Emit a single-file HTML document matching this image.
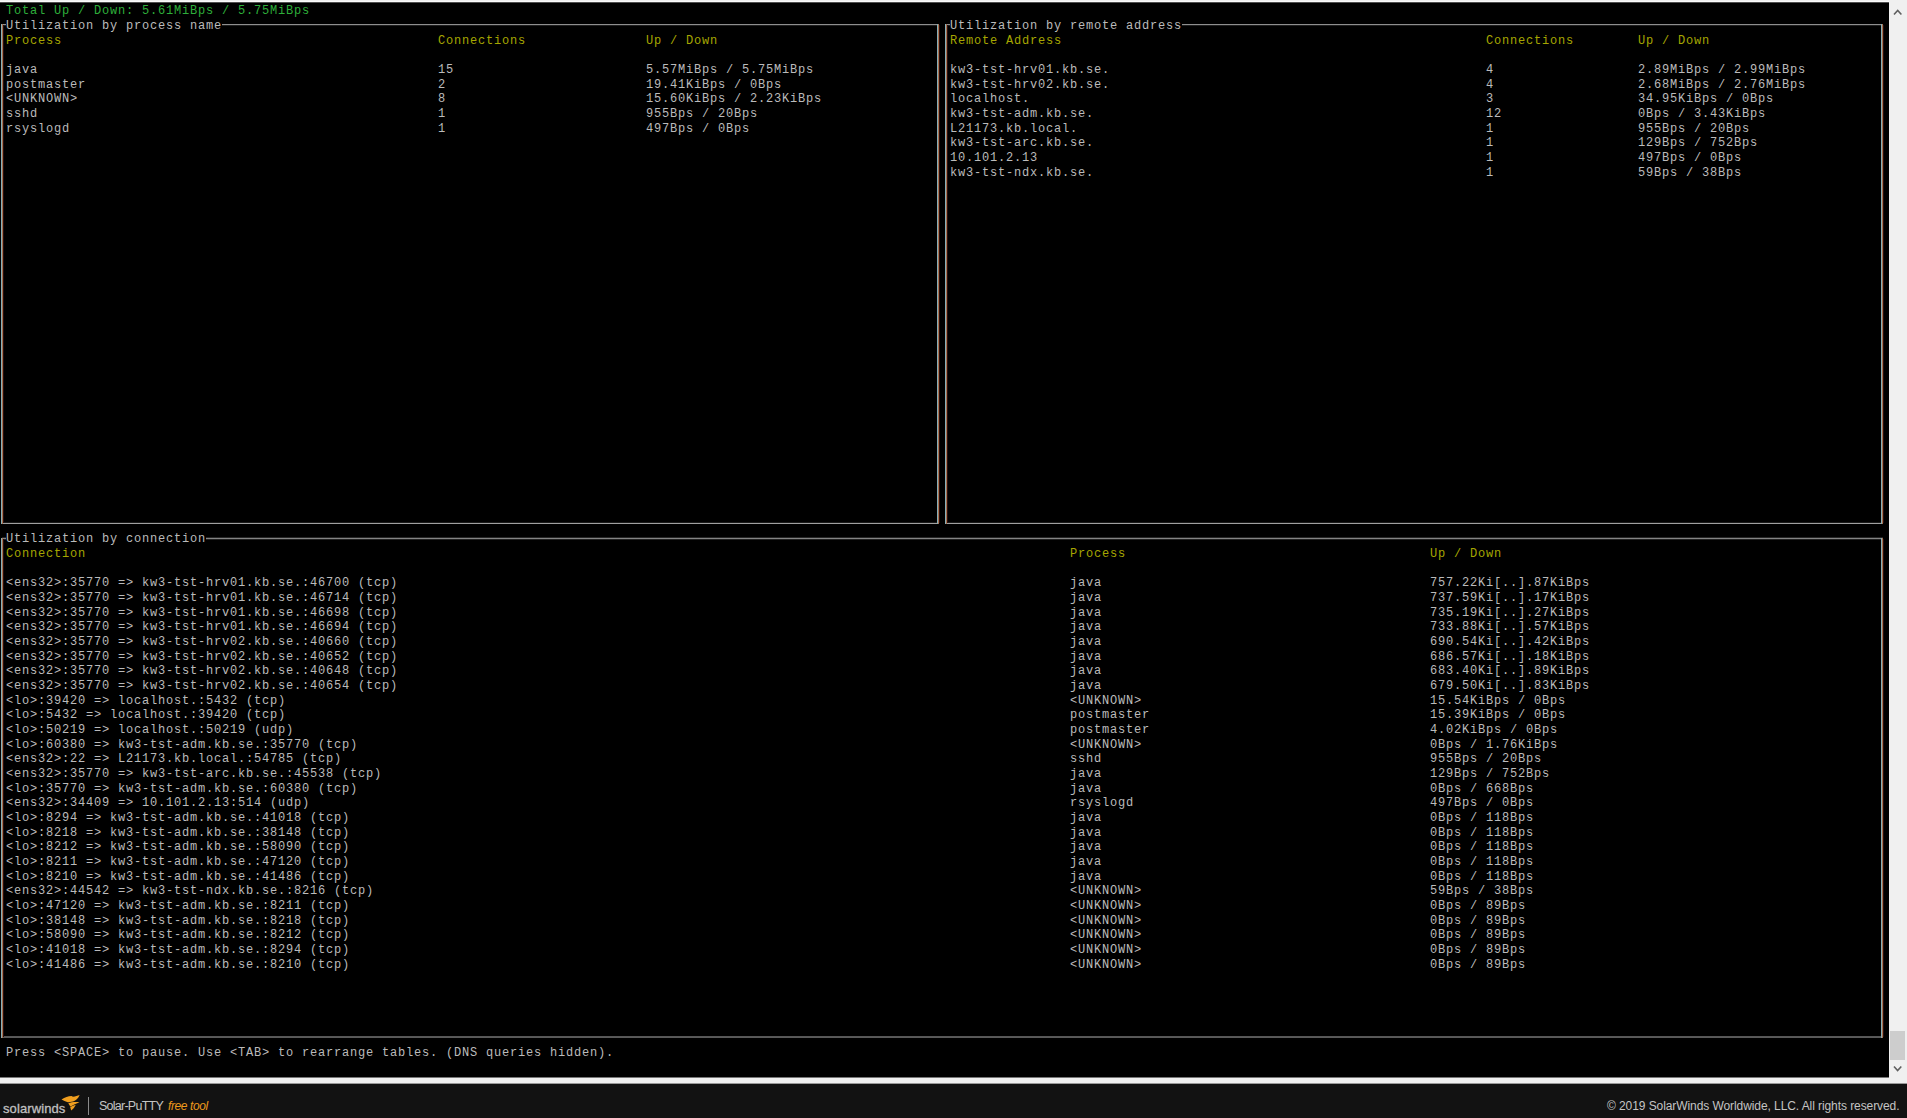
<!DOCTYPE html>
<html><head><meta charset="utf-8">
<style>
html,body{margin:0;padding:0;width:1907px;height:1118px;overflow:hidden;background:#f0f0f0;position:relative}
#term{position:absolute;left:0;top:2px;width:1889px;height:1075px;background:#000}
#topedge{position:absolute;left:0;top:0;width:1907px;height:2px;background:#f0f0f0}
.t{position:absolute;font-family:"Liberation Mono",monospace;font-size:12.0px;line-height:14.6667px;height:14.6667px;white-space:pre;letter-spacing:0.8000px}
#lines{position:absolute;left:0;top:0}
#sb{position:absolute;left:1889px;top:0;width:18px;height:1084px;background:#f0f0f0}
#thumb{position:absolute;left:1890px;top:1031px;width:15px;height:29px;background:#cdcdcd}
#footer{position:absolute;left:0;top:1084px;width:1907px;height:34px;background:#121212;font-family:"Liberation Sans",sans-serif}

#footer div{position:absolute;white-space:pre;line-height:1}
#footer .sw{left:3px;top:18px;font-weight:normal;font-size:13px;letter-spacing:0.1px;color:#c0c0c0;-webkit-text-stroke:0.3px #c0c0c0}
#footer .logo{position:absolute;left:58px;top:8px}
#footer .div{left:88px;top:13px;width:1px;height:18px;background:#8a8a8a}
#footer .sp{left:99px;top:16px;font-size:12.5px;letter-spacing:-0.75px;color:#c4c4c4}
#footer .ft{left:168px;top:16px;font-size:12px;font-style:italic;letter-spacing:-0.4px;color:#ef9a1c}
#footer .cp{left:1607px;top:16px;font-size:12px;letter-spacing:-0.08px;color:#c4c4c4}
.chev{position:absolute}
</style></head><body>
<div id="term"></div>
<div style="position:absolute;left:0;top:1px;width:1889px;height:1px;background:#fafafa"></div>
<div style="position:absolute;left:0;top:2px;width:1889px;height:1px;background:#505050"></div>
<div style="position:absolute;left:1889px;top:2px;width:1px;height:1075px;background:#fafafa"></div>
<div style="position:absolute;left:0;top:1077px;width:1889px;height:1px;background:#777"></div>
<div id="sb"></div>
<div id="thumb"></div>
<div style="position:absolute;left:0;top:1083px;width:1907px;height:1px;background:#999"></div>
<svg class="chev" style="left:1890px;top:5px" width="14" height="14" viewBox="0 0 14 14"><polyline points="4,9.5 7.7,5.5 11.4,9.5" fill="none" stroke="#606060" stroke-width="1.6"/></svg>
<svg class="chev" style="left:1890px;top:1062px" width="14" height="14" viewBox="0 0 14 14"><polyline points="4,4.5 7.6,8.5 11.3,4.5" fill="none" stroke="#606060" stroke-width="1.6"/></svg>

<svg id="lines" width="1907" height="1118">
<rect x="2" y="24" width="4" height="1" fill="#8e8e8e"/>
<rect x="2" y="25" width="4" height="1" fill="#1e1e1e"/>
<rect x="222" y="24" width="717" height="1" fill="#8e8e8e"/>
<rect x="222" y="25" width="717" height="1" fill="#1e1e1e"/>
<rect x="1" y="523" width="938" height="1" fill="#a0a0a0"/>
<rect x="1" y="522" width="938" height="1" fill="#1a1a1a"/>
<rect x="1" y="24" width="1" height="500" fill="#88b0b8"/>
<rect x="2" y="24" width="1" height="500" fill="#a8704f"/>
<rect x="3" y="25" width="1" height="498" fill="#2a0e0c"/>
<rect x="937" y="24" width="1" height="500" fill="#88b0b8"/>
<rect x="938" y="24" width="1" height="500" fill="#a8704f"/>
<rect x="939" y="25" width="1" height="498" fill="#2a0e0c"/>
<rect x="946" y="24" width="4" height="1" fill="#8e8e8e"/>
<rect x="946" y="25" width="4" height="1" fill="#1e1e1e"/>
<rect x="1182" y="24" width="701" height="1" fill="#8e8e8e"/>
<rect x="1182" y="25" width="701" height="1" fill="#1e1e1e"/>
<rect x="945" y="523" width="938" height="1" fill="#a0a0a0"/>
<rect x="945" y="522" width="938" height="1" fill="#1a1a1a"/>
<rect x="945" y="24" width="1" height="500" fill="#88b0b8"/>
<rect x="946" y="24" width="1" height="500" fill="#a8704f"/>
<rect x="947" y="25" width="1" height="498" fill="#2a0e0c"/>
<rect x="1881" y="24" width="1" height="500" fill="#88b0b8"/>
<rect x="1882" y="24" width="1" height="500" fill="#a8704f"/>
<rect x="1883" y="25" width="1" height="498" fill="#2a0e0c"/>
<rect x="2" y="537" width="4" height="1" fill="#262626"/>
<rect x="2" y="538" width="4" height="1" fill="#848484"/>
<rect x="2" y="539" width="4" height="1" fill="#222222"/>
<rect x="206" y="537" width="1677" height="1" fill="#262626"/>
<rect x="206" y="538" width="1677" height="1" fill="#848484"/>
<rect x="206" y="539" width="1677" height="1" fill="#222222"/>
<rect x="1" y="1036" width="1882" height="1" fill="#565656"/>
<rect x="1" y="1037" width="1882" height="1" fill="#5a5a5a"/>
<rect x="1" y="538" width="1" height="500" fill="#88b0b8"/>
<rect x="2" y="538" width="1" height="500" fill="#a8704f"/>
<rect x="3" y="539" width="1" height="498" fill="#2a0e0c"/>
<rect x="1881" y="538" width="1" height="500" fill="#88b0b8"/>
<rect x="1882" y="538" width="1" height="500" fill="#a8704f"/>
<rect x="1883" y="539" width="1" height="498" fill="#2a0e0c"/>
</svg>
<div class="t" style="top:4.17px;left:6px;color:#2eae3a">Total Up / Down: 5.61MiBps / 5.75MiBps</div>
<div class="t" style="top:18.83px;left:6px;color:#bbbbbb">Utilization by process name</div>
<div class="t" style="top:18.83px;left:950px;color:#bbbbbb">Utilization by remote address</div>
<div class="t" style="top:33.50px;left:6px;color:#a6a600">Process</div>
<div class="t" style="top:33.50px;left:438px;color:#a6a600">Connections</div>
<div class="t" style="top:33.50px;left:646px;color:#a6a600">Up / Down</div>
<div class="t" style="top:33.50px;left:950px;color:#a6a600">Remote Address</div>
<div class="t" style="top:33.50px;left:1486px;color:#a6a600">Connections</div>
<div class="t" style="top:33.50px;left:1638px;color:#a6a600">Up / Down</div>
<div class="t" style="top:62.83px;left:6px;color:#bbbbbb">java</div>
<div class="t" style="top:62.83px;left:438px;color:#bbbbbb">15</div>
<div class="t" style="top:62.83px;left:646px;color:#bbbbbb">5.57MiBps / 5.75MiBps</div>
<div class="t" style="top:77.50px;left:6px;color:#bbbbbb">postmaster</div>
<div class="t" style="top:77.50px;left:438px;color:#bbbbbb">2</div>
<div class="t" style="top:77.50px;left:646px;color:#bbbbbb">19.41KiBps / 0Bps</div>
<div class="t" style="top:92.17px;left:6px;color:#bbbbbb">&lt;UNKNOWN&gt;</div>
<div class="t" style="top:92.17px;left:438px;color:#bbbbbb">8</div>
<div class="t" style="top:92.17px;left:646px;color:#bbbbbb">15.60KiBps / 2.23KiBps</div>
<div class="t" style="top:106.83px;left:6px;color:#bbbbbb">sshd</div>
<div class="t" style="top:106.83px;left:438px;color:#bbbbbb">1</div>
<div class="t" style="top:106.83px;left:646px;color:#bbbbbb">955Bps / 20Bps</div>
<div class="t" style="top:121.50px;left:6px;color:#bbbbbb">rsyslogd</div>
<div class="t" style="top:121.50px;left:438px;color:#bbbbbb">1</div>
<div class="t" style="top:121.50px;left:646px;color:#bbbbbb">497Bps / 0Bps</div>
<div class="t" style="top:62.83px;left:950px;color:#bbbbbb">kw3-tst-hrv01.kb.se.</div>
<div class="t" style="top:62.83px;left:1486px;color:#bbbbbb">4</div>
<div class="t" style="top:62.83px;left:1638px;color:#bbbbbb">2.89MiBps / 2.99MiBps</div>
<div class="t" style="top:77.50px;left:950px;color:#bbbbbb">kw3-tst-hrv02.kb.se.</div>
<div class="t" style="top:77.50px;left:1486px;color:#bbbbbb">4</div>
<div class="t" style="top:77.50px;left:1638px;color:#bbbbbb">2.68MiBps / 2.76MiBps</div>
<div class="t" style="top:92.17px;left:950px;color:#bbbbbb">localhost.</div>
<div class="t" style="top:92.17px;left:1486px;color:#bbbbbb">3</div>
<div class="t" style="top:92.17px;left:1638px;color:#bbbbbb">34.95KiBps / 0Bps</div>
<div class="t" style="top:106.83px;left:950px;color:#bbbbbb">kw3-tst-adm.kb.se.</div>
<div class="t" style="top:106.83px;left:1486px;color:#bbbbbb">12</div>
<div class="t" style="top:106.83px;left:1638px;color:#bbbbbb">0Bps / 3.43KiBps</div>
<div class="t" style="top:121.50px;left:950px;color:#bbbbbb">L21173.kb.local.</div>
<div class="t" style="top:121.50px;left:1486px;color:#bbbbbb">1</div>
<div class="t" style="top:121.50px;left:1638px;color:#bbbbbb">955Bps / 20Bps</div>
<div class="t" style="top:136.17px;left:950px;color:#bbbbbb">kw3-tst-arc.kb.se.</div>
<div class="t" style="top:136.17px;left:1486px;color:#bbbbbb">1</div>
<div class="t" style="top:136.17px;left:1638px;color:#bbbbbb">129Bps / 752Bps</div>
<div class="t" style="top:150.83px;left:950px;color:#bbbbbb">10.101.2.13</div>
<div class="t" style="top:150.83px;left:1486px;color:#bbbbbb">1</div>
<div class="t" style="top:150.83px;left:1638px;color:#bbbbbb">497Bps / 0Bps</div>
<div class="t" style="top:165.50px;left:950px;color:#bbbbbb">kw3-tst-ndx.kb.se.</div>
<div class="t" style="top:165.50px;left:1486px;color:#bbbbbb">1</div>
<div class="t" style="top:165.50px;left:1638px;color:#bbbbbb">59Bps / 38Bps</div>
<div class="t" style="top:532.17px;left:6px;color:#bbbbbb">Utilization by connection</div>
<div class="t" style="top:546.83px;left:6px;color:#a6a600">Connection</div>
<div class="t" style="top:546.83px;left:1070px;color:#a6a600">Process</div>
<div class="t" style="top:546.83px;left:1430px;color:#a6a600">Up / Down</div>
<div class="t" style="top:576.17px;left:6px;color:#bbbbbb">&lt;ens32&gt;:35770 =&gt; kw3-tst-hrv01.kb.se.:46700 (tcp)</div>
<div class="t" style="top:576.17px;left:1070px;color:#bbbbbb">java</div>
<div class="t" style="top:576.17px;left:1430px;color:#bbbbbb">757.22Ki[..].87KiBps</div>
<div class="t" style="top:590.83px;left:6px;color:#bbbbbb">&lt;ens32&gt;:35770 =&gt; kw3-tst-hrv01.kb.se.:46714 (tcp)</div>
<div class="t" style="top:590.83px;left:1070px;color:#bbbbbb">java</div>
<div class="t" style="top:590.83px;left:1430px;color:#bbbbbb">737.59Ki[..].17KiBps</div>
<div class="t" style="top:605.50px;left:6px;color:#bbbbbb">&lt;ens32&gt;:35770 =&gt; kw3-tst-hrv01.kb.se.:46698 (tcp)</div>
<div class="t" style="top:605.50px;left:1070px;color:#bbbbbb">java</div>
<div class="t" style="top:605.50px;left:1430px;color:#bbbbbb">735.19Ki[..].27KiBps</div>
<div class="t" style="top:620.17px;left:6px;color:#bbbbbb">&lt;ens32&gt;:35770 =&gt; kw3-tst-hrv01.kb.se.:46694 (tcp)</div>
<div class="t" style="top:620.17px;left:1070px;color:#bbbbbb">java</div>
<div class="t" style="top:620.17px;left:1430px;color:#bbbbbb">733.88Ki[..].57KiBps</div>
<div class="t" style="top:634.83px;left:6px;color:#bbbbbb">&lt;ens32&gt;:35770 =&gt; kw3-tst-hrv02.kb.se.:40660 (tcp)</div>
<div class="t" style="top:634.83px;left:1070px;color:#bbbbbb">java</div>
<div class="t" style="top:634.83px;left:1430px;color:#bbbbbb">690.54Ki[..].42KiBps</div>
<div class="t" style="top:649.50px;left:6px;color:#bbbbbb">&lt;ens32&gt;:35770 =&gt; kw3-tst-hrv02.kb.se.:40652 (tcp)</div>
<div class="t" style="top:649.50px;left:1070px;color:#bbbbbb">java</div>
<div class="t" style="top:649.50px;left:1430px;color:#bbbbbb">686.57Ki[..].18KiBps</div>
<div class="t" style="top:664.17px;left:6px;color:#bbbbbb">&lt;ens32&gt;:35770 =&gt; kw3-tst-hrv02.kb.se.:40648 (tcp)</div>
<div class="t" style="top:664.17px;left:1070px;color:#bbbbbb">java</div>
<div class="t" style="top:664.17px;left:1430px;color:#bbbbbb">683.40Ki[..].89KiBps</div>
<div class="t" style="top:678.83px;left:6px;color:#bbbbbb">&lt;ens32&gt;:35770 =&gt; kw3-tst-hrv02.kb.se.:40654 (tcp)</div>
<div class="t" style="top:678.83px;left:1070px;color:#bbbbbb">java</div>
<div class="t" style="top:678.83px;left:1430px;color:#bbbbbb">679.50Ki[..].83KiBps</div>
<div class="t" style="top:693.50px;left:6px;color:#bbbbbb">&lt;lo&gt;:39420 =&gt; localhost.:5432 (tcp)</div>
<div class="t" style="top:693.50px;left:1070px;color:#bbbbbb">&lt;UNKNOWN&gt;</div>
<div class="t" style="top:693.50px;left:1430px;color:#bbbbbb">15.54KiBps / 0Bps</div>
<div class="t" style="top:708.17px;left:6px;color:#bbbbbb">&lt;lo&gt;:5432 =&gt; localhost.:39420 (tcp)</div>
<div class="t" style="top:708.17px;left:1070px;color:#bbbbbb">postmaster</div>
<div class="t" style="top:708.17px;left:1430px;color:#bbbbbb">15.39KiBps / 0Bps</div>
<div class="t" style="top:722.83px;left:6px;color:#bbbbbb">&lt;lo&gt;:50219 =&gt; localhost.:50219 (udp)</div>
<div class="t" style="top:722.83px;left:1070px;color:#bbbbbb">postmaster</div>
<div class="t" style="top:722.83px;left:1430px;color:#bbbbbb">4.02KiBps / 0Bps</div>
<div class="t" style="top:737.50px;left:6px;color:#bbbbbb">&lt;lo&gt;:60380 =&gt; kw3-tst-adm.kb.se.:35770 (tcp)</div>
<div class="t" style="top:737.50px;left:1070px;color:#bbbbbb">&lt;UNKNOWN&gt;</div>
<div class="t" style="top:737.50px;left:1430px;color:#bbbbbb">0Bps / 1.76KiBps</div>
<div class="t" style="top:752.17px;left:6px;color:#bbbbbb">&lt;ens32&gt;:22 =&gt; L21173.kb.local.:54785 (tcp)</div>
<div class="t" style="top:752.17px;left:1070px;color:#bbbbbb">sshd</div>
<div class="t" style="top:752.17px;left:1430px;color:#bbbbbb">955Bps / 20Bps</div>
<div class="t" style="top:766.83px;left:6px;color:#bbbbbb">&lt;ens32&gt;:35770 =&gt; kw3-tst-arc.kb.se.:45538 (tcp)</div>
<div class="t" style="top:766.83px;left:1070px;color:#bbbbbb">java</div>
<div class="t" style="top:766.83px;left:1430px;color:#bbbbbb">129Bps / 752Bps</div>
<div class="t" style="top:781.50px;left:6px;color:#bbbbbb">&lt;lo&gt;:35770 =&gt; kw3-tst-adm.kb.se.:60380 (tcp)</div>
<div class="t" style="top:781.50px;left:1070px;color:#bbbbbb">java</div>
<div class="t" style="top:781.50px;left:1430px;color:#bbbbbb">0Bps / 668Bps</div>
<div class="t" style="top:796.17px;left:6px;color:#bbbbbb">&lt;ens32&gt;:34409 =&gt; 10.101.2.13:514 (udp)</div>
<div class="t" style="top:796.17px;left:1070px;color:#bbbbbb">rsyslogd</div>
<div class="t" style="top:796.17px;left:1430px;color:#bbbbbb">497Bps / 0Bps</div>
<div class="t" style="top:810.83px;left:6px;color:#bbbbbb">&lt;lo&gt;:8294 =&gt; kw3-tst-adm.kb.se.:41018 (tcp)</div>
<div class="t" style="top:810.83px;left:1070px;color:#bbbbbb">java</div>
<div class="t" style="top:810.83px;left:1430px;color:#bbbbbb">0Bps / 118Bps</div>
<div class="t" style="top:825.50px;left:6px;color:#bbbbbb">&lt;lo&gt;:8218 =&gt; kw3-tst-adm.kb.se.:38148 (tcp)</div>
<div class="t" style="top:825.50px;left:1070px;color:#bbbbbb">java</div>
<div class="t" style="top:825.50px;left:1430px;color:#bbbbbb">0Bps / 118Bps</div>
<div class="t" style="top:840.17px;left:6px;color:#bbbbbb">&lt;lo&gt;:8212 =&gt; kw3-tst-adm.kb.se.:58090 (tcp)</div>
<div class="t" style="top:840.17px;left:1070px;color:#bbbbbb">java</div>
<div class="t" style="top:840.17px;left:1430px;color:#bbbbbb">0Bps / 118Bps</div>
<div class="t" style="top:854.83px;left:6px;color:#bbbbbb">&lt;lo&gt;:8211 =&gt; kw3-tst-adm.kb.se.:47120 (tcp)</div>
<div class="t" style="top:854.83px;left:1070px;color:#bbbbbb">java</div>
<div class="t" style="top:854.83px;left:1430px;color:#bbbbbb">0Bps / 118Bps</div>
<div class="t" style="top:869.50px;left:6px;color:#bbbbbb">&lt;lo&gt;:8210 =&gt; kw3-tst-adm.kb.se.:41486 (tcp)</div>
<div class="t" style="top:869.50px;left:1070px;color:#bbbbbb">java</div>
<div class="t" style="top:869.50px;left:1430px;color:#bbbbbb">0Bps / 118Bps</div>
<div class="t" style="top:884.17px;left:6px;color:#bbbbbb">&lt;ens32&gt;:44542 =&gt; kw3-tst-ndx.kb.se.:8216 (tcp)</div>
<div class="t" style="top:884.17px;left:1070px;color:#bbbbbb">&lt;UNKNOWN&gt;</div>
<div class="t" style="top:884.17px;left:1430px;color:#bbbbbb">59Bps / 38Bps</div>
<div class="t" style="top:898.83px;left:6px;color:#bbbbbb">&lt;lo&gt;:47120 =&gt; kw3-tst-adm.kb.se.:8211 (tcp)</div>
<div class="t" style="top:898.83px;left:1070px;color:#bbbbbb">&lt;UNKNOWN&gt;</div>
<div class="t" style="top:898.83px;left:1430px;color:#bbbbbb">0Bps / 89Bps</div>
<div class="t" style="top:913.50px;left:6px;color:#bbbbbb">&lt;lo&gt;:38148 =&gt; kw3-tst-adm.kb.se.:8218 (tcp)</div>
<div class="t" style="top:913.50px;left:1070px;color:#bbbbbb">&lt;UNKNOWN&gt;</div>
<div class="t" style="top:913.50px;left:1430px;color:#bbbbbb">0Bps / 89Bps</div>
<div class="t" style="top:928.17px;left:6px;color:#bbbbbb">&lt;lo&gt;:58090 =&gt; kw3-tst-adm.kb.se.:8212 (tcp)</div>
<div class="t" style="top:928.17px;left:1070px;color:#bbbbbb">&lt;UNKNOWN&gt;</div>
<div class="t" style="top:928.17px;left:1430px;color:#bbbbbb">0Bps / 89Bps</div>
<div class="t" style="top:942.83px;left:6px;color:#bbbbbb">&lt;lo&gt;:41018 =&gt; kw3-tst-adm.kb.se.:8294 (tcp)</div>
<div class="t" style="top:942.83px;left:1070px;color:#bbbbbb">&lt;UNKNOWN&gt;</div>
<div class="t" style="top:942.83px;left:1430px;color:#bbbbbb">0Bps / 89Bps</div>
<div class="t" style="top:957.50px;left:6px;color:#bbbbbb">&lt;lo&gt;:41486 =&gt; kw3-tst-adm.kb.se.:8210 (tcp)</div>
<div class="t" style="top:957.50px;left:1070px;color:#bbbbbb">&lt;UNKNOWN&gt;</div>
<div class="t" style="top:957.50px;left:1430px;color:#bbbbbb">0Bps / 89Bps</div>
<div class="t" style="top:1045.50px;left:6px;color:#bbbbbb">Press &lt;SPACE&gt; to pause. Use &lt;TAB&gt; to rearrange tables. (DNS queries hidden).</div>
<div id="footer">
<div class="sw">solarwinds</div>
<svg class="logo" width="30" height="26" viewBox="0 0 30 26"><g fill="#f09f1f">
<path d="M3.5 7.6 C7 5.5 10 4.2 13.5 4.1 L15 4.8 C17.5 4.5 19.5 3.8 21.6 3 C20.5 6 18 8.5 15 9.5 C13 10 11 10.3 9.8 10.3 C7.5 9.6 5.5 8.5 3.5 7.6 Z"/>
<path d="M10.3 11.2 C13.5 10 17.5 9.6 21.5 10.2 C18.5 11.6 15 13 12.4 14.4 C11.6 13.5 11 12.3 10.3 11.2 Z"/>
<path d="M12.2 15 C14 14 16 13.2 17.8 12.8 C16.8 15 15.2 17 13.2 18.6 C12.8 17.4 12.5 16.2 12.2 15 Z"/>
</g></svg>
<div class="div"></div>
<div class="sp">Solar-PuTTY</div>
<div class="ft">free tool</div>
<div class="cp">&copy; 2019 SolarWinds Worldwide, LLC. All rights reserved.</div>
</div>
</body></html>
